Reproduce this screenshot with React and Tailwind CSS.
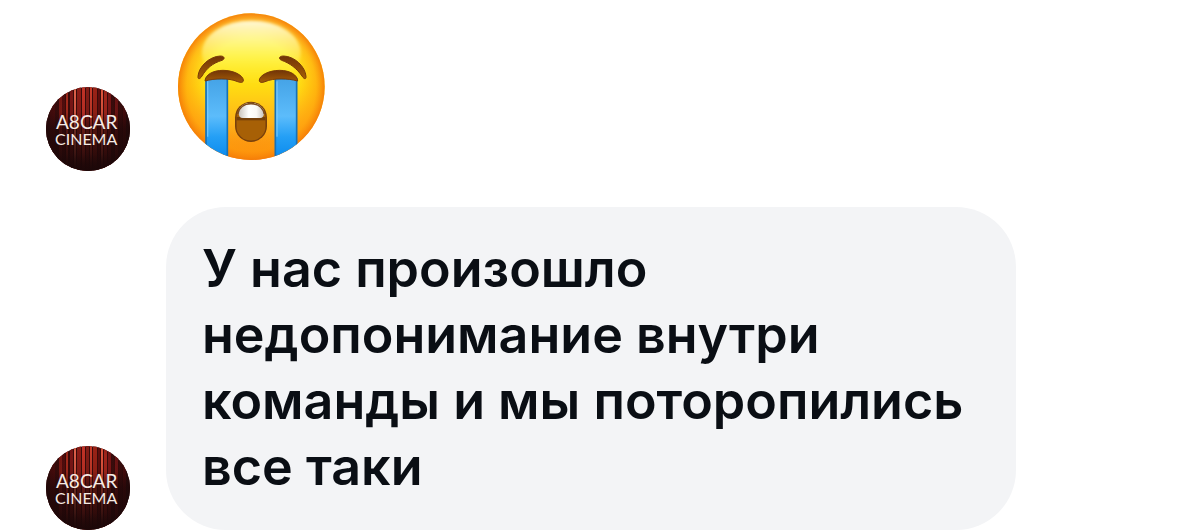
import { useId } from "react";

const curtain = [
  [0, 4, "#3a0b0a"], [4, 5, "#54110e"], [9, 4, "#3c0c0a"], [13, 3, "#8a1d15"],
  [16, 3, "#54100d"], [20, 2, "#a82a1d"], [24, 3, "#7c1812"], [28, 2, "#e0604a"],
  [31, 4, "#8c1c15"], [36, 3, "#c23325"], [40, 3, "#841a13"], [44, 2, "#c83a2a"],
  [47, 4, "#9a2018"], [52, 2, "#5e110e"], [55, 2, "#e2543e"], [58, 3, "#a5261b"],
  [62, 3, "#7e1912"], [66, 2, "#3c0c0a"], [69, 3, "#7c1812"], [73, 3, "#400c0a"],
  [77, 3, "#54110e"], [80, 4, "#300909"],
];

function Avatar() {
  const id = useId();
  return (
    <svg viewBox="0 0 84 84" className="size-21 shrink-0" role="img" aria-label="Ascar Cinema">
      <defs>
        <clipPath id={`${id}c`}><circle cx="42" cy="42" r="42" /></clipPath>
        <linearGradient id={`${id}s`} x1="0" y1="0" x2="0" y2="1">
          <stop offset="0" stopColor="#1c0708" stopOpacity="0" />
          <stop offset="0.3" stopColor="#1c0708" stopOpacity="0.1" />
          <stop offset="0.5" stopColor="#1c0708" stopOpacity="0.6" />
          <stop offset="0.8" stopColor="#1c0708" stopOpacity="0.7" />
          <stop offset="1" stopColor="#1c0708" />
        </linearGradient>
        <radialGradient id={`${id}v`} cx="0.5" cy="0.3" r="0.7">
          <stop offset="0.4" stopColor="#1c0708" stopOpacity="0" />
          <stop offset="1" stopColor="#1c0708" stopOpacity="0.85" />
        </radialGradient>
        <filter id={`${id}b`}><feGaussianBlur stdDeviation="0.7 0" /></filter>
      </defs>
      <g clipPath={`url(#${id}c)`}>
        <rect width="84" height="84" fill="#3a0b0a" />
        <g filter={`url(#${id}b)`}>
          {curtain.map(([x, w, fill]) => (
            <rect key={x} x={x} y="0" width={w} height="84" fill={fill} />
          ))}
        </g>
        <rect width="84" height="84" fill={`url(#${id}s)`} />
        <rect width="84" height="84" fill={`url(#${id}v)`} />
        <text fill="#f6ebe4" fontFamily="Lato, sans-serif">
          <tspan x="10" y="42" fontSize="19">A8CAR</tspan>
          <tspan x="9" y="58" fontSize="16">CINEMA</tspan>
        </text>
      </g>
    </svg>
  );
}

function CryingFace() {
  return (
    <svg viewBox="22 39 444 444" className="size-37 shrink-0" role="img" aria-label="Громко плачу">
      <defs>
        <linearGradient id="face" x1="0" y1="0" x2="0" y2="1">
          <stop offset="0" stopColor="#fff36b" />
          <stop offset="0.3" stopColor="#ffee22" />
          <stop offset="0.5" stopColor="#ffdb12" />
          <stop offset="0.75" stopColor="#ffb218" />
          <stop offset="1" stopColor="#f9800f" />
        </linearGradient>
        <radialGradient id="rim">
          <stop offset="0.65" stopColor="#ff9d0a" stopOpacity="0" />
          <stop offset="0.88" stopColor="#ff9d0a" stopOpacity="0.6" />
          <stop offset="1" stopColor="#f57c07" stopOpacity="0.95" />
        </radialGradient>
        <linearGradient id="shine" x1="0" y1="0" x2="0" y2="1">
          <stop offset="0" stopColor="#fffbe0" stopOpacity="0.95" />
          <stop offset="0.45" stopColor="#fff98a" stopOpacity="0.6" />
          <stop offset="1" stopColor="#fff23a" stopOpacity="0" />
        </linearGradient>
        <linearGradient id="tear" x1="0" y1="0" x2="0" y2="1">
          <stop offset="0" stopColor="#45a3e6" />
          <stop offset="0.45" stopColor="#5cbcfb" />
          <stop offset="0.7" stopColor="#249ff5" />
          <stop offset="1" stopColor="#0787ec" />
        </linearGradient>
        <linearGradient id="brow" x1="0" y1="0" x2="0" y2="1">
          <stop offset="0" stopColor="#713407" />
          <stop offset="1" stopColor="#a55d06" />
        </linearGradient>
        <linearGradient id="teeth" x1="0" y1="0" x2="1" y2="0">
          <stop offset="0" stopColor="#c9c3bd" />
          <stop offset="0.4" stopColor="#ffffff" />
          <stop offset="0.7" stopColor="#faf8f5" />
          <stop offset="1" stopColor="#c9c3bd" />
        </linearGradient>
        <clipPath id="disc"><circle cx="245" cy="260" r="220" /></clipPath>
        <clipPath id="mouth"><rect x="200" y="308" width="88" height="114" rx="44" /></clipPath>
        <filter id="soft"><feGaussianBlur stdDeviation="5" /></filter>
      </defs>
      <circle cx="245" cy="260" r="220" fill="url(#face)" />
      <circle cx="245" cy="260" r="220" fill="url(#rim)" />
      <ellipse cx="245" cy="158" rx="148" ry="96" fill="url(#shine)" filter="url(#soft)" />
      <g clipPath="url(#disc)">
        <rect x="109" y="236" width="64" height="250" fill="url(#tear)" stroke="#1671b8" strokeWidth="5" />
        <rect x="317" y="236" width="64" height="250" fill="url(#tear)" stroke="#1671b8" strokeWidth="5" />
        <path d="M114 244 V410 M322 244 V410" stroke="#83d2ff" strokeWidth="4" opacity="0.7" />
      </g>
      <g fill="url(#brow)" stroke="#793b08" strokeWidth="3" strokeLinejoin="round">
        <path d="M106 243 C107 224 130 211 160 211 C192 211 220 226 221 240 C222 249 212 248 204 245 C176 233 135 235 106 243Z" />
        <path d="M384 243 C383 224 360 211 330 211 C298 211 270 226 269 240 C268 249 278 248 286 245 C314 233 355 235 384 243Z" />
        <path d="M85 229 C87 200 119 169 152 168 C165 168 167 177 157 181 C128 190 111 205 97 228 C91 238 84 239 85 229Z" />
        <path d="M409 229 C407 200 375 169 342 168 C327 168 326 177 336 181 C361 190 381 205 397 228 C403 238 410 239 409 229Z" />
      </g>
      <rect x="196" y="305" width="96" height="121" rx="48" fill="#78400c" />
      <g clipPath="url(#mouth)">
        <rect x="200" y="308" width="88" height="114" fill="#a76006" />
        <rect x="200" y="351" width="88" height="10" fill="#75400b" />
        <path d="M207 308 H283 V340 Q283 354 271 354 H219 Q207 354 207 340Z" fill="url(#teeth)" />
        <path d="M204 342 C208 322 222 311 244 311 C266 311 280 322 284 342" fill="none" stroke="#7b4b20" strokeWidth="5" />
      </g>
    </svg>
  );
}

export default function App() {
  return (
    <main className="flex flex-col gap-9 bg-white pt-[13px] pl-[46px] pr-9 font-['Inter',sans-serif]">
      <article className="flex items-end gap-[47px]">
        <Avatar />
        <div className="pb-2.5">
          <CryingFace />
        </div>
      </article>
      <article className="flex items-end gap-9">
        <Avatar />
        <p className="max-w-[850px] flex-1 rounded-[60px] bg-[#f3f4f6] px-9 pt-[29px] pb-[30px] text-[52px] leading-[66px] font-semibold text-[#0a0e14]">
          У нас произошло недопонимание внутри команды и мы поторопились все таки
        </p>
      </article>
    </main>
  );
}
